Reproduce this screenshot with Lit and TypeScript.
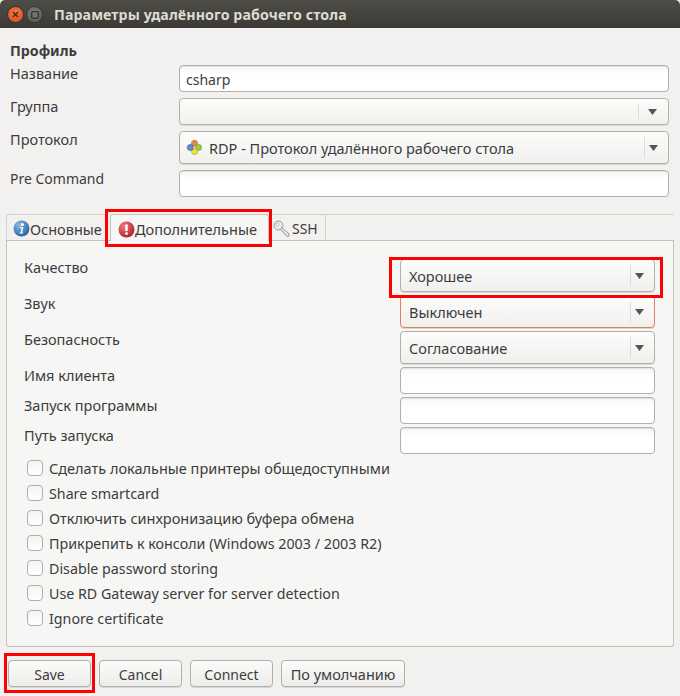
import { LitElement, html, css } from "lit";
import { customElement } from "lit/decorators.js";

const checks: [string, string][] = [
  ["Сделать локальные принтеры общедоступными", "ru"],
  ["Share smartcard", "lat"],
  ["Отключить синхронизацию буфера обмена", "ru"],
  ["Прикрепить к консоли (Windows 2003 / 2003 R2)", "mix"],
  ["Disable password storing", "lat"],
  ["Use RD Gateway server for server detection", "lat"],
  ["Ignore certificate", "lat"],
];

const arrow = html`<svg class="arrow" width="9" height="6" viewBox="0 0 9 6"><path d="M0 0H9L4.5 6Z" fill="#555"/></svg>`;

const protoIcon = html`<svg class="ic" width="17" height="17" viewBox="0 0 18 18">
  <circle cx="9" cy="4.6" r="3.2" fill="#e88a3c" stroke="#b5651d" stroke-width=".7"/>
  <circle cx="13.4" cy="9" r="3.2" fill="#9ccc3c" stroke="#6f9a1e" stroke-width=".7"/>
  <circle cx="9" cy="13.4" r="3.2" fill="#f2dc4a" stroke="#b9a51c" stroke-width=".7"/>
  <circle cx="4.6" cy="9" r="3.2" fill="#5e8fd0" stroke="#34639f" stroke-width=".7"/>
</svg>`;

const infoIcon = html`<svg class="ic" width="17" height="17" viewBox="0 0 17 17">
  <defs><radialGradient id="ib" cx=".35" cy=".3" r=".8"><stop offset="0" stop-color="#8db8e4"/><stop offset="1" stop-color="#1f5a9c"/></radialGradient></defs>
  <circle cx="8.5" cy="8.5" r="8" fill="url(#ib)"/>
  <circle cx="9.4" cy="4.4" r="1.5" fill="#fff"/>
  <path d="M6.8 7.2h3.6l-1.3 5.4h1.2l-.2 1H6.4l.2-1h1l1-4.4H6.6z" fill="#fff"/>
</svg>`;

const warnIcon = html`<svg class="ic" width="17" height="17" viewBox="0 0 17 17">
  <defs><radialGradient id="rb" cx=".35" cy=".3" r=".8"><stop offset="0" stop-color="#ee7b7b"/><stop offset="1" stop-color="#a81c24"/></radialGradient></defs>
  <circle cx="8.5" cy="8.5" r="8" fill="url(#rb)"/>
  <rect x="7.3" y="3.2" width="2.4" height="7" rx="1" fill="#fff"/>
  <circle cx="8.5" cy="12.6" r="1.4" fill="#fff"/>
</svg>`;

const keyIcon = html`<svg class="ic" width="18" height="18" viewBox="0 0 18 18">
  <g fill="#e8e8e6" stroke="#9b9b98" stroke-width="1">
    <circle cx="5.5" cy="5.5" r="4.5"/>
    <path d="M8.6 7.6l7.4 6-.2 2.6-2.4-.2-.6-1.6-1.4-.3-.4-1.5-3.7-3z"/>
  </g>
  <circle cx="4.4" cy="4.4" r="1.2" fill="#fff" stroke="#a5a5a3" stroke-width=".6"/>
</svg>`;

@customElement("app-root")
export class AppRoot extends LitElement {
  static styles = css`
    :host {
      display: block;
      position: relative;
      width: 680px;
      height: 696px;
      overflow: hidden;
      background: #f2f1f0;
      color: #3c3c3c;
      font-family: "Noto Sans", "Open Sans", sans-serif;
      font-size: 14.5px;
      line-height: 18px;
    }
    .lat { font-size: 14px; }
    .chk .lat { font-size: 14.25px; margin-top: 2px; }
    .chk .mix { font-size: 14.3px; margin-top: 2px; }
    .entry .lat { margin-top: 2px; }
    .title {
      height: 28px;
      box-sizing: border-box;
      background: linear-gradient(#4e4d47, #3b3a35);
      border-radius: 5px 5px 0 0;
      display: flex;
      align-items: center;
      padding-left: 7px;
      padding-top: 1px;
      color: #dfdbd2;
      font-weight: 700;
      font-size: 14.2px;
      letter-spacing: 0.1px;
    }
    .wbtn {
      width: 17px;
      height: 17px;
      border-radius: 50%;
      box-sizing: border-box;
      display: flex;
      align-items: center;
      justify-content: center;
    }
    .wbtn.close { background: radial-gradient(circle at 50% 35%, #f47a45, #d9481c); border: 1px solid #38342e; margin-right: 1px; }
    .wbtn.max { background: radial-gradient(circle at 50% 35%, #7b7a74, #5b5a55); border: 1px solid #38342e; margin-left: 1px; margin-right: 11px; }
    .main { padding: 0 6px; }
    .profile { padding: 14px 4px 0; }
    h4 { margin: 0 0 5px; font-size: 14.2px; line-height: 18px; font-weight: 700; color: #3c3c3c; }
    .form { display: grid; grid-template-columns: 169px 490px; row-gap: 6px; margin-top: 1px; }
    .form label { line-height: 18px; margin-top: -1px; }
    .form label.lat { margin-top: 0; }
    .entry, .combo {
      box-sizing: border-box;
      border: 1px solid #b3b0ab;
      border-radius: 4px;
      display: flex;
      align-items: center;
      padding-left: 8px;
    }
    .form .entry, .form .combo { padding-left: 6px; }
    .entry { height: 27px; background: linear-gradient(#f6f6f5, #ffffff 35%); color: #3c3c3c; box-shadow: inset 0 1px 1px #e2e1df; }
    .combo {
      height: 33px;
      background: linear-gradient(#fcfcfb, #f0f0ef);
      box-shadow: 0 1px 0 #d8d7d5;
      justify-content: space-between;
    }
    .combo.h27 { height: 27px; }
    .combo.warn { border-color: #e0815a; }
    .combo .val { display: flex; align-items: center; gap: 6px; min-width: 0; }
    .combo .end {
      width: 17px;
      padding-right: 6px;
      height: calc(100% - 10px);
      border-left: 1px solid #dddcda;
      display: flex;
      align-items: center;
      justify-content: center;
      flex: none;
    }
    .combo.h27 .end { width: 27px; padding-right: 2px; }
    .ic { flex: none; }
    .tabs { display: flex; height: 26px; margin-top: 17px; align-items: flex-end; border-bottom: 1px solid #c4c2bd; box-sizing: content-box; }
    .tab {
      height: 26px;
      box-sizing: border-box;
      border: 1px solid #d3d1cd;
      border-bottom: none;
      border-left: none;
      background: #f2f1f0;
      display: flex;
      align-items: center;
      padding: 2px 2px 0 6px;
    }
    .tab:first-child { border-left: 1px solid #d3d1cd; width: 101px; padding-right: 0; border-radius: 3px 0 0 0; }
    .tab.on { width: 159px; background: #f6f6f5; margin: 0 0 -1px 3px; height: 27px; border-left: 1px solid #c4c2bd; border-color: #c4c2bd; border-radius: 3px 3px 0 0; padding-left: 7px; }
    .tab.ssh { width: 57px; padding-left: 4px; font-size: 14px; }
    .tab.ssh .ic { margin-right: 1px; }
    .tab.rest { flex: 1; border-right: none; padding: 0; }
    .panel {
      height: 406px;
      box-sizing: border-box;
      background: #f6f6f5;
      border: 1px solid #c4c2bd;
      border-top: none;
      border-radius: 0 0 3px 3px;
      padding: 18px 18px 0 17px;
    }
    .opts { display: grid; grid-template-columns: 376px 255px; row-gap: 3px; }
    .opts label { margin-top: -1px; }
    .checks { display: flex; flex-direction: column; gap: 7px; margin-top: 5px; padding-left: 3px; }
    .chk { display: flex; align-items: center; height: 18px; gap: 6px; }
    .box {
      width: 16px;
      height: 16px;
      box-sizing: border-box;
      border: 1px solid #b0aea9;
      border-radius: 4px;
      background: linear-gradient(#f4f4f3, #fff);
      flex: none;
    }
    .btns { display: flex; gap: 8px; margin-top: 13px; padding-left: 2px; }
    .btn {
      height: 27px;
      width: 83px;
      box-sizing: border-box;
      border: 1px solid #b3b0ab;
      border-radius: 4px;
      background: linear-gradient(#fbfbfa, #ececeb);
      box-shadow: 0 1px 0 #d8d7d5;
      display: flex;
      align-items: center;
      justify-content: center;
      text-align: center;
    }
    .btn.lat { padding-top: 2px; }
    .btn.wide { width: 124px; }
    .mark { position: absolute; border: 3px solid #f00; box-sizing: border-box; pointer-events: none; }
    .mark.tabm { left: 105px; top: 209px; width: 167px; height: 38px; }
    .mark.qual { left: 389px; top: 257px; width: 274px; height: 41px; }
    .mark.save { left: 4px; top: 653px; width: 91px; height: 40px; }
  `;

  render() {
    return html`
      <div class="title">
        <div class="wbtn close">
          <svg width="7" height="7" viewBox="0 0 7 7"><path d="M1 1l5 5M6 1L1 6" stroke="#43221a" stroke-width="1.3"/></svg>
        </div>
        <div class="wbtn max">
          <svg width="8" height="8" viewBox="0 0 8 8"><rect x=".7" y=".7" width="6.6" height="6.6" rx="1" fill="none" stroke="#36352f" stroke-width="1.3"/></svg>
        </div>
        <span>Параметры удалённого рабочего стола</span>
      </div>
      <div class="main">
        <div class="profile">
          <h4>Профиль</h4>
          <div class="form">
            <label>Название</label>
            <div class="entry"><span class="lat">csharp</span></div>
            <label>Группа</label>
            <div class="combo h27"><span class="val"></span><span class="end">${arrow}</span></div>
            <label>Протокол</label>
            <div class="combo"><span class="val">${protoIcon}RDP - Протокол удалённого рабочего стола</span><span class="end">${arrow}</span></div>
            <label class="lat">Pre Command</label>
            <div class="entry"></div>
          </div>
        </div>
        <div class="tabs">
          <div class="tab">${infoIcon}Основные</div>
          <div class="tab on">${warnIcon}Дополнительные</div>
          <div class="tab ssh">${keyIcon}SSH</div>
          <div class="tab rest"></div>
        </div>
        <div class="panel">
          <div class="opts">
            <label>Качество</label>
            <div class="combo"><span class="val">Хорошее</span><span class="end">${arrow}</span></div>
            <label>Звук</label>
            <div class="combo warn"><span class="val">Выключен</span><span class="end">${arrow}</span></div>
            <label>Безопасность</label>
            <div class="combo"><span class="val">Согласование</span><span class="end">${arrow}</span></div>
            <label>Имя клиента</label>
            <div class="entry"></div>
            <label>Запуск программы</label>
            <div class="entry"></div>
            <label>Путь запуска</label>
            <div class="entry"></div>
          </div>
          <div class="checks">
            ${checks.map(([t, c]) => html`<div class="chk"><span class="box"></span><span class=${c}>${t}</span></div>`)}
          </div>
        </div>
        <div class="btns">
          <div class="btn lat">Save</div>
          <div class="btn lat">Cancel</div>
          <div class="btn lat">Connect</div>
          <div class="btn wide">По умолчанию</div>
        </div>
      </div>
      <div class="mark tabm"></div>
      <div class="mark qual"></div>
      <div class="mark save"></div>
    `;
  }
}
